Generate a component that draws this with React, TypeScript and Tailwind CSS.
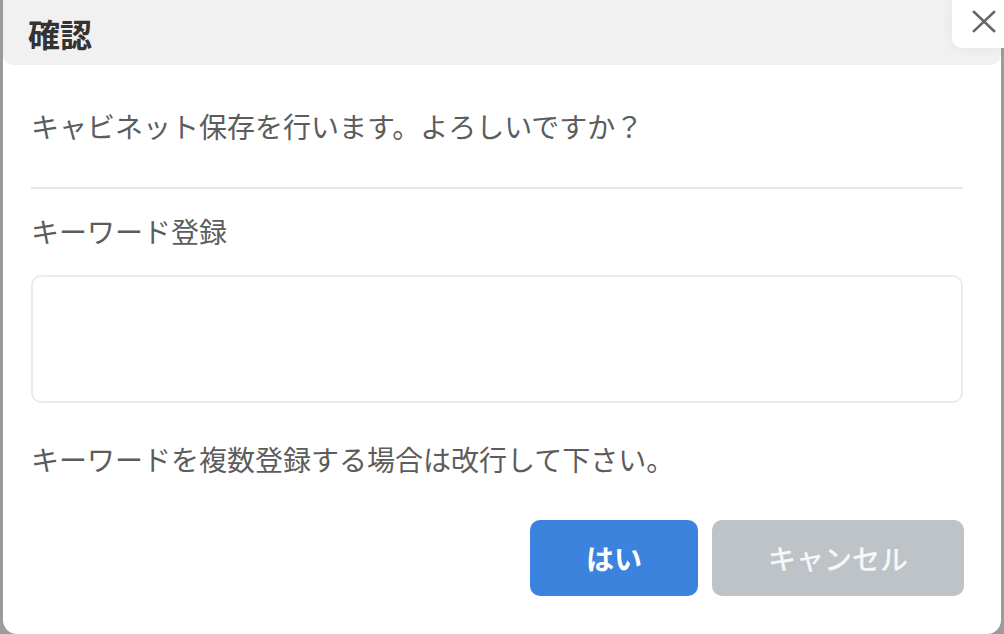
import React from 'react'

const font = { fontFamily: '"Noto Sans CJK JP", "Noto Sans", sans-serif' }

const CloseIcon: React.FC = () => (
  <svg width="24" height="24" viewBox="0 0 24 24" fill="none" stroke="#666" strokeWidth={2.6} strokeLinecap="square">
    <path d="M2 3l20 19M22 3L2 22" />
  </svg>
)

const App: React.FC = () => {
  return (
    <div className="relative h-[634px] w-[1004px] overflow-hidden bg-[#9b9b9b]" style={font}>
      {/* dialog */}
      <div className="ml-[3px] flex h-[634px] w-[998px] flex-col rounded-b-[14px] bg-white">
        <div className="flex h-[65px] items-center rounded-b-[10px] bg-[#f1f1f1] pl-[25px]">
          <h2 className="text-[32px] leading-none font-bold text-[#333]">確認</h2>
        </div>

        <div className="flex flex-col pl-[28px] text-[28px] text-[#5c5c5c]">
          <p className="mt-[41px] leading-[40px]">キャビネット保存を行います。よろしいですか？</p>
          <div className="mt-[41px] h-[2px] w-[932px] bg-[#e6e6e6]" />
          <p className="mt-[22px] leading-[40px]">キーワード登録</p>
          <textarea className="mt-[24px] h-[128px] w-[932px] resize-none rounded-[10px] border-2 border-[#ebebeb] bg-white outline-none" />
          <p className="mt-[36px] leading-[40px]">キーワードを複数登録する場合は改行して下さい。</p>
          <div className="mt-[41px] flex w-[933px] justify-end gap-[14px]">
            <button className="h-[76px] w-[168px] rounded-[10px] bg-[#3b83dd] text-[28px] font-bold text-white">
              はい
            </button>
            <button className="h-[76px] w-[252px] rounded-[10px] bg-[#bec3c7] text-[28px] font-medium text-[#f7f7f7]">
              キャンセル
            </button>
          </div>
        </div>
      </div>

      {/* close button */}
      <button className="absolute top-0 right-0 flex h-[48px] w-[52px] items-center justify-center rounded-bl-[10px] bg-white shadow-[0_0_14px_rgba(0,0,0,0.06)]">
        <span className="-mt-[6px] -mr-[12px]">
          <CloseIcon />
        </span>
      </button>
    </div>
  )
}

export default App
